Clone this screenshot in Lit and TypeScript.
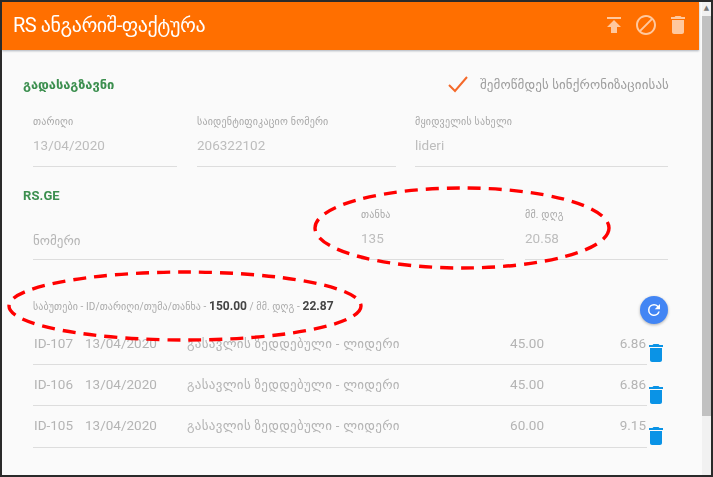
import { LitElement, html, css, svg } from "lit";
import { customElement } from "lit/decorators.js";

const trash = svg`<path d="M6 19c0 1.1.9 2 2 2h8c1.1 0 2-.9 2-2V7H6v12zM19 4h-3.5l-1-1h-5l-1 1H5v2h14V4z"/>`;

const rows = [
  ["ID-107", "13/04/2020", "45.00", "6.86"],
  ["ID-106", "13/04/2020", "45.00", "6.86"],
  ["ID-105", "13/04/2020", "60.00", "9.15"],
];

@customElement("app-root")
export class AppRoot extends LitElement {
  static styles = css`
    :host { display: block; width: 713px; height: 477px; font-family: Roboto, "DejaVu Sans", sans-serif; }
    * { box-sizing: border-box; }
    .frame { position: relative; width: 713px; height: 477px; background: #fafafa; border: 2px solid #2a2a2a; display: flex; overflow: hidden; }
    .main { width: 697px; flex: none; display: flex; flex-direction: column; filter: blur(0.4px); }
    .scroll { flex: 1; margin-left: 3px; background: #f1f1f1; display: flex; flex-direction: column; }
    .arrow { height: 14px; background: #f1f1f1; color: #777; font-size: 7px; line-height: 13px; text-align: center; }
    .thumb { height: 400px; background: #c1c1c1; }
    header { height: 48px; flex: none; background: #ff6f00; color: #fff; display: flex; align-items: center; padding: 0 9px 3px 11px; box-shadow: 0 1px 2px rgba(80,90,110,.45); }
    h1 { margin: 0; flex: 1; font-weight: 400; font-size: 20px; letter-spacing: -.45px; }
    .hicons { display: flex; align-items: center; gap: 8px; }
    .hicons svg { width: 24px; height: 24px; fill: rgba(255,255,255,.62); display: block; }
    .body { padding: 0 30px 0 19px; flex: 1; }
    .top { display: flex; align-items: center; justify-content: space-between; height: 32px; margin-top: 18px; padding-left: 2px; }
    .green { color: #3c8f4f; font-size: 13px; font-weight: 700; letter-spacing: -.1px; }
    .sync { display: flex; align-items: center; gap: 10px; color: #9e9e9e; font-size: 13px; letter-spacing: .1px; white-space: nowrap; }
    .sync svg { width: 24px; height: 24px; fill: none; stroke: #f4692a; stroke-width: 2; display: block; }
    .fields { display: flex; padding-left: 12px; }
    .f { border-bottom: 1px solid #ddd; height: 67px; display: flex; flex-direction: column; flex: none; }
    .f label { color: #a8a8a8; font-size: 10px; letter-spacing: .2px; line-height: 13px; height: 13px; margin-top: 15px; white-space: nowrap; }
    .f span { color: #bdbdbd; font-size: 13.5px; line-height: 16px; margin-top: 9px; }
    .w1 { width: 144px; margin-right: 20px; }
    .w2 { width: 199px; margin-right: 19px; }
    .w3 { width: 253px; }
    .rs { margin-top: 21px; padding-left: 2px; line-height: 15px; letter-spacing: .1px; }
    .nom { width: 308px; margin-right: 20px; justify-content: flex-end; padding-bottom: 11px; height: 57px; color: #b5b5b5; font-size: 13px; line-height: 15px; }
    .f2 { height: 57px; }
    .f2 label { margin-top: 5px; }
    .w4 { width: 143px; margin-right: 21px; }
    .w5 { width: 143px; }
    .sum { margin-top: 36px; padding-left: 12px; color: #aaa; font-size: 10px; letter-spacing: .1px; height: 20px; display: flex; align-items: center; position: relative; white-space: pre; }
    .sum b { color: #444; font-size: 12px; letter-spacing: 0; }
    .fab { position: absolute; left: 619px; top: 0; width: 28px; height: 28px; border-radius: 50%; background: #4285f4; box-shadow: 0 1px 3px rgba(0,0,0,.3); display: flex; align-items: center; justify-content: center; }
    .fab svg { width: 18px; height: 18px; fill: #fff; display: block; }
    .rows { margin-top: 7.6px; padding-left: 12px; }
    .row { display: flex; align-items: center; height: 41.4px; }
    .cells { display: flex; flex: none; width: 614px; height: 100%; border-bottom: 1px solid #ddd; color: #b4b4b4; font-size: 13.5px; line-height: 39px; }
    .c1 { width: 52px; padding-left: 1px; flex: none; }
    .c2 { width: 102px; flex: none; }
    .c3 { width: 212px; flex: none; font-size: 13px; white-space: nowrap; letter-spacing: .3px; }
    .c4 { flex: 1; text-align: right; padding-right: 1px; }
    .c5 { width: 102px; flex: none; text-align: right; padding-right: 1px; }
    .del { width: 24px; height: 24px; fill: #0a93e6; margin: 18px 0 0 -3px; display: block; flex: none; }
    .ovl { position: absolute; left: -2px; top: -2px; width: 713px; height: 477px; pointer-events: none; }
    .ovl ellipse { fill: none; stroke: #f00; stroke-width: 3.4; stroke-dasharray: 13 8; }
  `;

  render() {
    return html`<div class="frame">
      <div class="main">
        <header>
          <h1>RS ანგარიშ-ფაქტურა</h1>
          <div class="hicons">
            <svg viewBox="0 0 24 24"><path d="M5 4v2h14V4H5zm0 10h4v6h6v-6h4l-7-7-7 7z"/></svg>
            <svg viewBox="0 0 24 24"><path d="M12 2C6.48 2 2 6.48 2 12s4.48 10 10 10 10-4.48 10-10S17.52 2 12 2zM4 12c0-4.42 3.58-8 8-8 1.85 0 3.55.63 4.9 1.69L5.69 16.9C4.63 15.55 4 13.85 4 12zm8 8c-1.85 0-3.55-.63-4.9-1.69L18.31 7.1C19.37 8.45 20 10.15 20 12c0 4.42-3.58 8-8 8z"/></svg>
            <svg viewBox="0 0 24 24">${trash}</svg>
          </div>
        </header>
        <div class="body">
          <div class="top">
            <div class="green">გადასაგზავნი</div>
            <div class="sync">
              <svg viewBox="0 0 24 24"><path d="M3 13l6 6L21 5"/></svg>
              <span>შემოწმდეს სინქრონიზაციისას</span>
            </div>
          </div>
          <div class="fields">
            <div class="f w1"><label>თარიღი</label><span>13/04/2020</span></div>
            <div class="f w2"><label>საიდენტიფიკაციო ნომერი</label><span>206322102</span></div>
            <div class="f w3"><label>მყიდველის სახელი</label><span>lideri</span></div>
          </div>
          <div class="green rs">RS.GE</div>
          <div class="fields">
            <div class="f nom">ნომერი</div>
            <div class="f f2 w4"><label>თანხა</label><span>135</span></div>
            <div class="f f2 w5"><label>მმ. დღგ</label><span>20.58</span></div>
          </div>
          <div class="sum"><span>საბუთები - ID/თარიღი/თუმა/თანხა - <b>150.00</b> / მმ. დღგ - <b>22.87</b></span>
            <div class="fab"><svg viewBox="0 0 24 24"><path d="M17.65 6.35A7.96 7.96 0 0 0 12 4a8 8 0 1 0 7.75 10h-2.08A6 6 0 1 1 12 6c1.66 0 3.14.69 4.22 1.78L13 11h7V4l-2.35 2.35z"/></svg></div>
          </div>
          <div class="rows">
            ${rows.map(
              (r) => html`<div class="row">
                <div class="cells">
                  <div class="c1">${r[0]}</div>
                  <div class="c2">${r[1]}</div>
                  <div class="c3">გასავლის ზედდებული - ლიდერი</div>
                  <div class="c4">${r[2]}</div>
                  <div class="c5">${r[3]}</div>
                </div>
                <svg class="del" viewBox="0 0 24 24">${trash}</svg>
              </div>`
            )}
          </div>
        </div>
      </div>
      <div class="scroll">
        <div class="arrow">▲</div>
        <div class="thumb"></div>
      </div>
      <svg class="ovl" viewBox="0 0 713 477">
        <ellipse cx="462" cy="228" rx="147" ry="40"></ellipse>
        <ellipse cx="185" cy="306" rx="176" ry="34"></ellipse>
      </svg>
    </div>`;
  }
}
